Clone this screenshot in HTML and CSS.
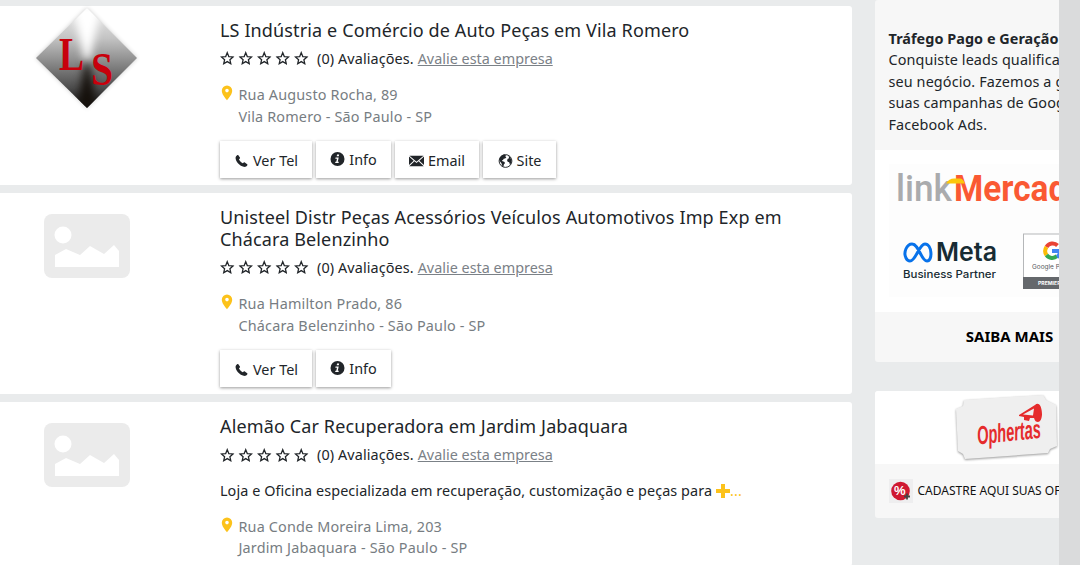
FILE: index.html
```
<!DOCTYPE html>
<html lang="pt-br">
<head>
	<meta charset="utf-8">
	<title>Auto Peças em São Paulo</title>
	<meta name="viewport" content="width=device-width, initial-scale=1">
	<link rel="stylesheet" href="styles.css">
</head>
<body>
	<svg class="sprite" width="0" height="0">
		<symbol id="star" viewBox="0 0 16 16"><path d="M8 1.800l1.700 4.300 4.700.4-3.500 3.100 1 4.500L8 11.700l-3.900 2.400 1-4.500-3.500-3.100 4.700-.4z" fill="none" stroke="currentColor" stroke-width="1.400"/></symbol>
		<symbol id="stars" viewBox="0 0 89 15">
			<use href="#star" x="0" y="0" width="14.500" height="14.500"/>
			<use href="#star" x="18.500" y="0" width="14.500" height="14.500"/>
			<use href="#star" x="37" y="0" width="14.500" height="14.500"/>
			<use href="#star" x="55.500" y="0" width="14.500" height="14.500"/>
			<use href="#star" x="74" y="0" width="14.500" height="14.500"/>
		</symbol>
		<symbol id="pin" viewBox="0 0 12 16"><path fill-rule="evenodd" d="M6 .5A5.200 5.200 0 0 0 .8 5.700C.8 9.300 4 12.500 6 15.300 8 12.500 11.200 9.300 11.200 5.700A5.200 5.200 0 0 0 6 .5zM6 3.800a1.800 1.800 0 1 1 0 3.600 1.800 1.800 0 0 1 0-3.600z"/></symbol>
		<symbol id="phone" viewBox="0 0 16 16"><path d="M3.300 1.200c.4-.3.8-.2 1.100.2l1.800 2.500c.3.400.2.900-.1 1.200l-1 .9c.3 1.300 2.700 3.800 4.300 4.500l1.200-.9c.4-.3.800-.3 1.200 0l2.700 2c.4.300.5.800.2 1.200-1 1.400-2.400 2.300-4.200 1.800C6 13.300 2.300 9.600 1.300 5.300.9 3.500 2 2.100 3.300 1.200z"/></symbol>
		<symbol id="info" viewBox="0 0 16 16"><circle cx="8" cy="8" r="8"/><path fill="#fff" d="M7.500 2.800h2.400l-.4 2.100H7.100zM5.800 6.200h3.600l-1.100 5h1.200l-.3 1.400H5.300l.3-1.400h1l.8-3.600H5.500z"/></symbol>
		<symbol id="mail" viewBox="0 0 16 12"><path d="M.5.5h15L8 6.800zM0 1.300l5 4.300-5 4.700zM16 1.300l-5 4.300 5 4.700zM5.800 6.200L8 8.100l2.200-1.900 5.500 5.300H.3z"/></symbol>
		<symbol id="globe" viewBox="0 0 16 16"><circle cx="8" cy="8" r="7.300" fill="#fff" stroke="currentColor" stroke-width="1.100"/><path d="M.9 6C1.700 3 4 1.200 6.700.7l1.900.9-.7 1.500 1.100.8-1.500 1.300-1.600.3-.7 1.400H4.100l.4 1.300 2 .6 1 1.500-1.400 1.600-.4 2.600-1.700-1.500-.6-2.500L1.500 8.400zM11.500 2.300l1.800 1.200 1.600 3.600-.5 3.400-1.300 1.800-.9-2.900-1.700-.6-.7-1.600.8-1.700 1.500-.6z"/></symbol>
		<symbol id="no-photo" viewBox="0 0 86 64"><rect width="86" height="64" rx="8" fill="#ebebeb"/><circle cx="19" cy="21" r="8.500" fill="#fff"/><path d="M11 53V41l11-6 14 6 10-9 14 8 10-9 5 6v16z" fill="#fff"/></symbol>
	</svg>

	<div class="page">
		<div class="list">
			<div class="card">
				<div class="photo">
					<svg class="logo-ls" width="108" height="108" viewBox="0 0 108 108">
						<defs>
							<linearGradient id="steel" x1="0" y1="0" x2="0" y2="1">
								<stop offset="0" stop-color="#eee"/><stop offset=".3" stop-color="#c4c4c4"/><stop offset=".55" stop-color="#888"/><stop offset=".8" stop-color="#4c4c4c"/><stop offset="1" stop-color="#111"/>
							</linearGradient>
							<clipPath id="cut"><path d="M55 3l50 50-50 50L4 53z"/></clipPath>
						</defs>
						<path class="diamond" d="M55 3l50 50-50 50L4 53z" fill="url(#steel)"/>
						<g clip-path="url(#cut)">
							<path class="soft" d="M40 0h30L57 56h-4z" fill="#fff"/>
							<path class="soft" d="M53 58h4l8 46H45z" fill="#15100b"/>
						</g>
						<text x="27" y="65" textLength="25" lengthAdjust="spacingAndGlyphs" class="ls">L</text>
						<text x="59" y="80" textLength="22" lengthAdjust="spacingAndGlyphs" class="ls">S</text>
					</svg>
				</div>
				<div class="info">
					<h2>LS Indústria e Comércio de Auto Peças em Vila Romero</h2>
					<div class="rating"><svg class="stars"><use href="#stars"/></svg><span>(0) Avaliações.</span> <a>Avalie esta empresa</a></div>
					<div class="address"><svg class="pin"><use href="#pin"/></svg><div>Rua Augusto Rocha, 89<br>Vila Romero - São Paulo - SP</div></div>
					<div class="buttons">
						<div class="btn tel"><svg><use href="#phone"/></svg>Ver Tel</div>
						<div class="btn inf"><svg><use href="#info"/></svg>Info</div>
						<div class="btn email"><svg><use href="#mail"/></svg>Email</div>
						<div class="btn site"><svg><use href="#globe"/></svg>Site</div>
					</div>
				</div>
			</div>

			<div class="card">
				<div class="photo"><svg class="no-photo"><use href="#no-photo"/></svg></div>
				<div class="info">
					<h2>Unisteel Distr Peças Acessórios Veículos Automotivos Imp Exp em<br>Chácara Belenzinho</h2>
					<div class="rating"><svg class="stars"><use href="#stars"/></svg><span>(0) Avaliações.</span> <a>Avalie esta empresa</a></div>
					<div class="address"><svg class="pin"><use href="#pin"/></svg><div>Rua Hamilton Prado, 86<br>Chácara Belenzinho - São Paulo - SP</div></div>
					<div class="buttons">
						<div class="btn tel"><svg><use href="#phone"/></svg>Ver Tel</div>
						<div class="btn inf"><svg><use href="#info"/></svg>Info</div>
					</div>
				</div>
			</div>

			<div class="card">
				<div class="photo"><svg class="no-photo"><use href="#no-photo"/></svg></div>
				<div class="info">
					<h2>Alemão Car Recuperadora em Jardim Jabaquara</h2>
					<div class="rating"><svg class="stars"><use href="#stars"/></svg><span>(0) Avaliações.</span> <a>Avalie esta empresa</a></div>
					<div class="desc"><span>Loja e Oficina especializada em recuperação, customização e peças para</span><svg class="plus" viewBox="0 0 14 14"><path d="M5 0h4v5h5v4H9v5H5V9H0V5h5z"/></svg><b>...</b></div>
					<div class="address"><svg class="pin"><use href="#pin"/></svg><div>Rua Conde Moreira Lima, 203<br>Jardim Jabaquara - São Paulo - SP</div></div>
				</div>
			</div>
		</div>

		<div class="side">
			<div class="ad">
				<div class="ad-text">
					<strong>Tráfego Pago e Geração</strong><br>
					Conquiste leads qualificados<br>
					seu negócio. Fazemos a gestão<br>
					suas campanhas de Google<br>
					Facebook Ads.
				</div>
				<svg class="partners" width="270" height="162" viewBox="0 0 270 162">
					<rect width="270" height="162" fill="#fff"/>
					<rect x="14" y="14" width="256" height="133" fill="#fdfdfd"/>
					<text x="21" y="51" textLength="56" lengthAdjust="spacingAndGlyphs" class="link">link</text>
					<text x="79" y="51" textLength="132" lengthAdjust="spacingAndGlyphs" class="mercado">Mercado</text>
					<path d="M71 33.500q3-5 8-5h6q3 0 5 5z" fill="#fcc70b"/>
					<path d="M31 108c-3-6 1-14 6-14 7 0 9 17 15 17 6 0 5-17-2-17-6 0-9 17-15 17-2 0-3-1-4-3z" fill="none" stroke="#0872ea" stroke-width="3"/>
					<text x="61" y="111" textLength="61" lengthAdjust="spacingAndGlyphs" class="meta">Meta</text>
					<text x="28" y="128" textLength="93" lengthAdjust="spacingAndGlyphs" class="business">Business Partner</text>
					<rect x="148.500" y="84" width="75" height="54" fill="#fff" stroke="#b5b7b9"/>
					<rect x="148" y="127" width="76" height="12" fill="#65686c"/>
					<g fill="none" stroke-width="4">
						<path d="M182.500 95.500A7 7 0 0 0 171.500 97" stroke="#ea4335"/>
						<path d="M171.500 97A7 7 0 0 0 171.500 105" stroke="#fbbc05"/>
						<path d="M171.500 105A7 7 0 0 0 182 106" stroke="#34a853"/>
						<path d="M177 101h8q0 4-3 6" stroke="#4285f4"/>
					</g>
					<text x="157" y="119" textLength="46" lengthAdjust="spacingAndGlyphs" class="google">Google Partner</text>
					<text x="163" y="135" textLength="37" lengthAdjust="spacingAndGlyphs" class="premier">PREMIER 2023</text>
				</svg>
				<div class="more">SAIBA MAIS</div>
			</div>

			<div class="offers">
				<div class="ticket">
					<svg width="120" height="73" viewBox="0 0 120 73">
						<path class="paper" d="M14 9l79-5 3 5 10 5 1 41-7 3-2 4-83 6-2-5-5-3-2-42 7-3z" fill="#efefef"/>
						<g transform="rotate(-6 60 43)">
							<text x="27" y="50" textLength="64" lengthAdjust="spacingAndGlyphs" class="ophertas">Ophertas</text>
						</g>
						<path d="M69 24l16-10c4-4 7 2 7 9 0 5-2 8-4 8-2 0-3-1-4-4l-4 0-1 3-5-1 0-3-5-1zM73 23.500l10 1 1-7z" fill="#e52b2c" fill-rule="evenodd"/>
					</svg>
				</div>
				<div class="register">
					<svg width="24" height="24" viewBox="0 0 24 24">
						<rect width="24" height="24" fill="#eeeeef"/>
						<circle cx="11.500" cy="12" r="9.300" fill="#cf1831"/>
						<text x="5" y="16" class="percent">%</text>
						<path d="M18 14.500v6M15 17.500h6" stroke="#444" stroke-width="1.800"/>
					</svg>
					<span>CADASTRE AQUI SUAS OFERTAS</span>
				</div>
			</div>
		</div>
		<div class="edge"></div>
	</div>
</body>
</html>
```
FILE: styles.css
```
body {
	margin: 0;
	background: #e9ebec;
	color: #212529;
	font-family: "Noto Sans", "Open Sans", sans-serif;
	font-size: 14.4px;
	line-height: 21.6px;
	overflow: hidden;
}
.sprite {
	display: none;
}
.page {
	display: grid;
	grid-template-columns: 852px 207px 21px;
	height: 565px;
	overflow: hidden;
}
.list {
	display: flex;
	flex-direction: column;
	gap: 8px;
	padding-top: 6px;
}
.card {
	display: flex;
	flex-shrink: 0;
	box-sizing: border-box;
	padding: 14px 0 7px;
	background: #fff;
	border-radius: 0 3px 3px 0;
}
.photo {
	width: 220px;
	flex-shrink: 0;
}
.photo svg {
	display: block;
}
.logo-ls {
	margin: -15px 0 0 32px;
}
.diamond {
	filter: drop-shadow(0 0 2px #ccc);
}
.soft {
	filter: blur(4px);
}
.ls {
	font: bold 47px "Liberation Serif", serif;
	fill: #c8000c;
}
.no-photo {
	width: 86px;
	height: 64px;
	margin: 7px 0 0 44px;
}
.info {
	white-space: nowrap;
}
h2 {
	margin: 0 0 6.5px;
	font-size: 18px;
	font-weight: 400;
	line-height: 21.6px;
	letter-spacing: .13px;
}
.rating {
	display: flex;
	align-items: center;
	margin-bottom: 14.4px;
}
.rating span {
	margin: 0 4px 0 8px;
	letter-spacing: .1px;
}
.rating a {
	color: #7b8187;
	text-decoration: underline;
}
.stars {
	width: 89px;
	height: 15px;
}
.address {
	display: flex;
	gap: 4.5px;
	color: #777d82;
	letter-spacing: .17px;
}
.pin {
	width: 14px;
	height: 16px;
	margin-top: 1px;
	fill: #fcc21b;
}
.buttons {
	display: flex;
	gap: 4px;
	margin-top: 14px;
}
.btn {
	display: flex;
	align-items: center;
	justify-content: center;
	gap: 4px;
	box-sizing: border-box;
	height: 37px;
	padding-top: 2px;
	background: #fff;
	box-shadow: 0 1px 3px rgba(0, 0, 0, .4);
}
.btn svg {
	width: 15px;
	height: 14px;
	fill: #212529;
}
.tel {
	width: 92px;
}
.inf {
	width: 75px;
	padding-top: 0;
}
.btn.inf svg {
	margin-top: -1px;
}
.email {
	width: 84px;
}
.site {
	width: 73px;
}
.desc {
	display: flex;
	align-items: center;
	margin-bottom: 14px;
	letter-spacing: .08px;
}
.plus {
	width: 14px;
	height: 14px;
	margin-left: 4px;
	fill: #fcc21b;
}
.desc b {
	font-weight: 400;
	color: #fcc21b;
}
.side {
	overflow: hidden;
	padding-left: 22.5px;
	white-space: nowrap;
}
.ad, .offers {
	width: 270px;
	background: #f7f7f7;
	border-radius: 3px;
	overflow: hidden;
}
.ad {
	height: 362px;
}
.ad-text {
	box-sizing: border-box;
	height: 150px;
	padding: 27.5px 14px 0;
	letter-spacing: .12px;
}
.ad-text strong {
	letter-spacing: .05px;
}
.partners {
	display: block;
}
.link {
	font: 500 37px Roboto, sans-serif;
	fill: #aaabad;
}
.mercado {
	font: bold 37px Roboto, sans-serif;
	fill: #fa5933;
}
.meta {
	font: 600 26px Inter, sans-serif;
	fill: #172b33;
}
.business {
	font: 500 11px Inter, sans-serif;
	fill: #172b33;
}
.google {
	font: 6px Inter, sans-serif;
	fill: #55585c;
}
.premier {
	font: bold 5px Inter, sans-serif;
	fill: #fff;
}
.more {
	padding-top: 14px;
	text-align: center;
	font-size: 15px;
	font-weight: 700;
	color: #000;
}
.offers {
	height: 127px;
	margin-top: 29px;
}
.ticket {
	display: flex;
	justify-content: center;
	height: 73px;
	background: #fff;
}
.paper {
	filter: drop-shadow(0 1px 1px #999);
}
.ophertas {
	font: italic bold 26px "Liberation Sans", sans-serif;
	fill: #e52b2c;
}
.percent {
	font: bold 13px "Liberation Sans", sans-serif;
	fill: #fff;
}
.register {
	display: flex;
	align-items: center;
	gap: 5px;
	padding: 15px 14px;
	font-size: 12px;
	color: #111;
}
.edge {
	background: #dadbdc;
}
```
